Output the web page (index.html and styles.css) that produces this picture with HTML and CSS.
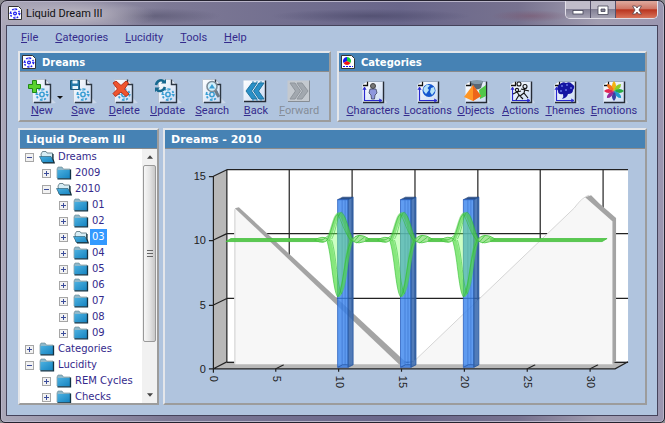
FILE: index.html
```html
<!DOCTYPE html>
<html lang="en">
<head>
<meta charset="utf-8">
<title>Liquid Dream III</title>
<link rel="stylesheet" href="styles.css">
</head>
<body>
<svg class="defs" aria-hidden="true">
  <defs>
    <linearGradient id="paper" x1="0" y1="0" x2="1" y2="1"><stop offset="0" stop-color="#fff"/><stop offset="1" stop-color="#c9daf3"/></linearGradient>
    <linearGradient id="blueface" x1="0" y1="0" x2="1" y2="1"><stop offset="0" stop-color="#4bb0e0"/><stop offset="1" stop-color="#1583c0"/></linearGradient>
    <symbol id="doc" viewBox="0 0 28 26">
      <path d="M19 26L28 25L23 20V26Z" fill="#d5e0ee" opacity=".7"/>
      <path d="M4.500 1.500H17.500L22.500 6.500V24.500H4.500Z" fill="url(#paper)" stroke="#b9c4d2"/>
      <path d="M17.500 1.500V6.500H22.500V24.500H6" fill="none" stroke="#2d3743" stroke-width="1.400"/>
      <g fill="none" stroke="#3b9fd4"><circle cx="14" cy="16.500" r="2.200" stroke-width="1.500"/><circle cx="14" cy="16.500" r="5.500" stroke-width="1.800" stroke-dasharray="2 2.300"/><path d="M14 10V13M14 20V23M7.500 16.500H10.500M17.500 16.500H20.500" stroke-width="1"/></g>
    </symbol>
    <symbol id="sheet" viewBox="0 0 28 26">
      <path d="M23 26L28 25L25 20Z" fill="#d5e0ee" opacity=".7"/>
      <path d="M3.500 6.500L8.500 3.500H24.500V24.500H3.500Z" fill="url(#paper)"/>
      <path d="M8.500 3.500V7.500H4" fill="#fff" stroke="#111" stroke-width="1.300"/>
      <path d="M24.500 3.500V24.500H4" fill="none" stroke="#252b35" stroke-width="1.400"/>
      <path d="M8.500 3.500H24" stroke="#9aabc2"/>
    </symbol>
    <symbol id="axes" viewBox="0 0 28 26"><path d="M5.500 10V22.500H22" fill="none" stroke="#2929cf" stroke-width="1.200"/><path d="M4 12L5.500 9L7 12M20 21L23 22.500L20 24" fill="none" stroke="#2929cf"/></symbol>
    <symbol id="chevrons" viewBox="0 0 28 26"><path d="M10 5H15L9.500 13L15 21H10L4 13ZM17 5H22L16.500 13L22 21H17L11.500 13Z"/></symbol>
    <symbol id="app" viewBox="0 0 14 14">
      <path d="M.5 .5H10.500L13.500 3.500V13.500H.5Z" fill="#fff" stroke="#333"/>
      <g fill="none" stroke="#1919ee"><circle cx="7" cy="7.500" r="1.400" stroke-width="1.200"/><circle cx="7" cy="7.500" r="4.500" stroke-width="1.500" stroke-dasharray="1.700 1.834"/><path d="M7 2V4.500M7 10.500V13M1.500 7.500H4M10 7.500H12.500" stroke-width=".8"/></g>
    </symbol>
    <symbol id="folder" viewBox="0 0 16 14">
      <path d="M1 3L2 1H6L7.500 3H14V12H1Z" fill="#8fb9cb" stroke="#64838f" stroke-width=".6"/>
      <path d="M1.500 4H14V12.500H1.500Z" fill="url(#blueface)"/>
      <path d="M14.500 3.500V12.800H1.500" fill="none" stroke="#123344" stroke-width="1.300"/>
    </symbol>
    <symbol id="folder-open" viewBox="0 0 16 14">
      <path d="M2 4L3.500 1.500H7L8 3H13.500V12H3Z" fill="#d7edf5" stroke="#536e7a" stroke-width=".8"/>
      <path d="M.5 6.500H12L15 12.500H3.500Z" fill="url(#blueface)" stroke="#29586b" stroke-width=".6"/>
      <path d="M14 4V9L15.200 12.900H4" fill="none" stroke="#102c38" stroke-width="1.200"/>
    </symbol>
  </defs>
</svg>

<div class="window">
  <header class="titlebar">
    <svg class="app-icon" aria-hidden="true"><use href="#app"/></svg>
    <h1 class="title">Liquid Dream III</h1>
    <div class="window-buttons">
      <button type="button" class="winbtn" aria-label="Minimize"><svg viewBox="0 0 12 12"><rect x="1" y="6.500" width="10" height="3.500" fill="#fff" stroke="#454557" stroke-width=".8"/></svg></button>
      <button type="button" class="winbtn" aria-label="Maximize"><svg viewBox="0 0 12 12"><path d="M1 2H11V10.500H1ZM4 5V7.500H8V5Z" fill="#fff" fill-rule="evenodd" stroke="#454557" stroke-width=".8"/></svg></button>
      <button type="button" class="winbtn close" aria-label="Close"><svg viewBox="0 0 12 12"><path d="M1.500 2H4.500L6 4L7.500 2H10.500L8 6L10.500 10H7.500L6 8L4.500 10H1.500L4 6Z" fill="#fff" stroke="#59434a" stroke-width=".8"/></svg></button>
    </div>
  </header>

  <main class="client">
    <nav class="menu">
      <a href="#file"><u>F</u>ile</a>
      <a href="#categories"><u>C</u>ategories</a>
      <a href="#lucidity"><u>L</u>ucidity</a>
      <a href="#tools"><u>T</u>ools</a>
      <a href="#help"><u>H</u>elp</a>
    </nav>

    <div class="toolbars">
      <section class="panel dreams">
        <h2 class="panel-head with-icon"><svg class="head-icon" aria-hidden="true"><use href="#app"/></svg>Dreams</h2>
        <div class="tools dream-tools">
          <button type="button" class="tool has-menu"><svg viewBox="0 0 28 26"><use href="#doc"/><path d="M4 4.500H8V8.500H12V12.500H8V16.500H4V12.500H0V8.500H4Z" transform="translate(.5 -2)" fill="#5ad32f" stroke="#218716"/></svg><span><u>N</u>ew</span></button>
          <button type="button" class="tool"><svg viewBox="0 0 28 26"><use href="#doc"/><path d="M1.500 2.500H10.500V11.500H1.500Z" fill="#267aa8" stroke="#175879"/><path d="M3.500 2.500H8.500V5.500H3.500ZM3.500 8H9V11H3.500Z" fill="#e8f5fc"/></svg><span><u>S</u>ave</span></button>
          <button type="button" class="tool"><svg viewBox="0 0 28 26"><use href="#doc"/><path d="M3 5L6 3L11 7.500L16 3L18.500 5L14.500 11L19 16L16 18.500L11 14L5.500 18.500L3 15.500L7.500 11Z" fill="#ef542e" stroke="#b9301a"/></svg><span><u>D</u>elete</span></button>
          <button type="button" class="tool"><svg viewBox="0 0 28 26"><use href="#doc"/><path d="M2 7C3 2 8 1 10 4M11 9C9 14 4 14 2.500 11" fill="none" stroke="#176990" stroke-width="2.500"/><path d="M7 5.500H12V1ZM6 9.500H1V14Z" fill="#176990"/></svg><span><u>U</u>pdate</span></button>
          <button type="button" class="tool"><svg viewBox="0 0 28 26"><use href="#doc"/><path d="M17 12L21 19" stroke="#6c7b88" stroke-width="3"/><circle cx="14" cy="8.500" r="5" fill="#d3f0fc" stroke="#7d8d99" stroke-width="1.600"/><path d="M11 10.500L14 6L17 10.500Z" fill="#3b9fd4"/></svg><span><u>S</u>earch</span></button>
          <button type="button" class="tool"><svg viewBox="0 0 28 26"><path d="M1.500 2.500H23.500V23.500H1.500Z" fill="url(#paper)"/><path d="M23.500 2.500V23.500H2" fill="none" stroke="#252b35" stroke-width="1.400"/><path d="M10 4H22M10 22H22" stroke="#3b8fbd" stroke-dasharray="2 2"/><use href="#chevrons" class="chev-blue"/></svg><span><u>B</u>ack</span></button>
          <button type="button" class="tool" disabled><svg viewBox="0 0 28 26"><path d="M2.500 2.500H24.500V23.500H2.500Z" fill="#c4c9cf"/><path d="M24.500 2.500V23.500H3" fill="none" stroke="#868d95"/><use href="#chevrons" class="chev-gray" transform="translate(27 0) scale(-1 1)"/></svg><span><u>F</u>orward</span></button>
        </div>
      </section>

      <section class="panel categories">
        <h2 class="panel-head with-icon"><svg class="head-icon" viewBox="0 0 14 14" aria-hidden="true"><path d="M.5 .5H10.500L13.500 3.500V13.500H.5Z" fill="#fff" stroke="#333"/><path d="M6 6V2A4 4 0 0 0 2.500 8Z" fill="#1414f0"/><path d="M6 6V2A4 4 0 0 1 9.500 8Z" fill="#11d035"/><path d="M6 6L9.500 8A4 4 0 0 1 2.500 8Z" fill="#f31313"/><path d="M2 11.500H12" stroke="#1414f0" stroke-dasharray="2 1"/></svg>Categories</h2>
        <div class="tools category-tools">
          <button type="button" class="tool"><svg viewBox="0 0 28 26"><use href="#sheet"/><use href="#axes"/><circle cx="14" cy="8" r="2.500" fill="#777" stroke="#444"/><path d="M11 11H17L18 15L16 17L15.500 21H12.500L12 17L10 15Z" fill="#8e97dd" stroke="#3f4462" stroke-width=".8"/></svg><span><u>C</u>haracters</span></button>
          <button type="button" class="tool"><svg viewBox="0 0 28 26"><use href="#sheet"/><use href="#axes"/><circle cx="15" cy="12.500" r="6.500" fill="#1557cf"/><path d="M9.500 10L13 6.500L16 7.500L13.500 10L15 12L12 16L9.500 13ZM17 10L20 9L21 13L18 17L16 14Z" fill="#b6e2f8"/></svg><span><u>L</u>ocations</span></button>
          <button type="button" class="tool"><svg viewBox="0 0 28 26"><use href="#sheet"/><path d="M8 3H21L19 10Q14 13 10 10Z" fill="#596773"/><ellipse cx="15" cy="4" rx="6" ry="2" fill="#849aa9"/><path d="M17 12L24 7V18L18 21Z" fill="#51c74a"/><path d="M11 7L19 18L11 23L2 19Z" fill="#ff9625"/><path d="M11 7L19 18L11 23Z" fill="#ed641a"/></svg><span><u>O</u>bjects</span></button>
          <button type="button" class="tool"><svg viewBox="0 0 28 26"><use href="#sheet"/><use href="#axes"/><g fill="none" stroke="#111" stroke-width="1.100"><circle cx="12" cy="6" r="2"/><circle cx="18" cy="8.500" r="2"/><circle cx="10" cy="12" r="1.600"/><path d="M10 14L12 17L9 22M10 14L6 16M12 17L16 21M10 14L14 13M18 11L17 15L21 20M17 15L13 18M14 11L18 12L22 13"/></g></svg><span><u>A</u>ctions</span></button>
          <button type="button" class="tool"><svg viewBox="0 0 28 26"><use href="#sheet"/><use href="#axes"/><path d="M9 6Q12 3 15 5Q19 3 21 6Q25 8 22 12Q22 16 17 16Q16 20 11 21Q13 19 12 16Q7 17 7 13Q5 8 9 6Z" fill="#1515a2"/><g fill="#6674e4"><circle cx="11" cy="8" r="1"/><circle cx="16" cy="7" r="1"/><circle cx="20" cy="10" r="1"/><circle cx="10" cy="13" r="1"/><circle cx="15" cy="12" r="1"/></g></svg><span><u>T</u>hemes</span></button>
          <button type="button" class="tool"><svg viewBox="0 0 28 26"><use href="#sheet"/><g transform="translate(14 13)"><path d="M0 0Q-4-6 0-10Q4-6 0 0Z" fill="#f2b311"/><path d="M0 0Q-4-6 0-10Q4-6 0 0Z" transform="rotate(45)" fill="#8fcc28"/><path d="M0 0Q-4-6 0-10Q4-6 0 0Z" transform="rotate(90)" fill="#27aa45"/><path d="M0 0Q-4-6 0-10Q4-6 0 0Z" transform="rotate(135)" fill="#2099cf"/><path d="M0 0Q-4-6 0-10Q4-6 0 0Z" transform="rotate(180)" fill="#3740a4"/><path d="M0 0Q-4-6 0-10Q4-6 0 0Z" transform="rotate(225)" fill="#942b9b"/><path d="M0 0Q-4-6 0-10Q4-6 0 0Z" transform="rotate(270)" fill="#e32552"/><path d="M0 0Q-4-6 0-10Q4-6 0 0Z" transform="rotate(315)" fill="#f27620"/></g></svg><span><u>E</u>motions</span></button>
        </div>
      </section>
    </div>

    <div class="work">
      <section class="panel tree-panel">
        <h2 class="panel-head">Liquid Dream III</h2>
        <div class="tree-body">
          <ul class="tree">
            <li><div class="node"><button type="button" class="toggle open" aria-label="Collapse Dreams"></button><svg><use href="#folder-open"/></svg><span>Dreams</span></div>
              <ul>
                <li><div class="node"><button type="button" class="toggle" aria-label="Expand 2009"></button><svg><use href="#folder"/></svg><span>2009</span></div></li>
                <li><div class="node"><button type="button" class="toggle open" aria-label="Collapse 2010"></button><svg><use href="#folder-open"/></svg><span>2010</span></div>
                  <ul>
                    <li><div class="node"><button type="button" class="toggle" aria-label="Expand 01"></button><svg><use href="#folder"/></svg><span>01</span></div></li>
                    <li><div class="node"><button type="button" class="toggle" aria-label="Expand 02"></button><svg><use href="#folder"/></svg><span>02</span></div></li>
                    <li><div class="node"><button type="button" class="toggle" aria-label="Expand 03"></button><svg><use href="#folder-open"/></svg><span class="selected">03</span></div></li>
                    <li><div class="node"><button type="button" class="toggle" aria-label="Expand 04"></button><svg><use href="#folder"/></svg><span>04</span></div></li>
                    <li><div class="node"><button type="button" class="toggle" aria-label="Expand 05"></button><svg><use href="#folder"/></svg><span>05</span></div></li>
                    <li><div class="node"><button type="button" class="toggle" aria-label="Expand 06"></button><svg><use href="#folder"/></svg><span>06</span></div></li>
                    <li><div class="node"><button type="button" class="toggle" aria-label="Expand 07"></button><svg><use href="#folder"/></svg><span>07</span></div></li>
                    <li><div class="node"><button type="button" class="toggle" aria-label="Expand 08"></button><svg><use href="#folder"/></svg><span>08</span></div></li>
                    <li><div class="node"><button type="button" class="toggle" aria-label="Expand 09"></button><svg><use href="#folder"/></svg><span>09</span></div></li>
                  </ul>
                </li>
              </ul>
            </li>
            <li><div class="node"><button type="button" class="toggle" aria-label="Expand Categories"></button><svg><use href="#folder"/></svg><span>Categories</span></div></li>
            <li><div class="node"><button type="button" class="toggle open" aria-label="Collapse Lucidity"></button><svg><use href="#folder"/></svg><span>Lucidity</span></div>
              <ul>
                <li><div class="node"><button type="button" class="toggle" aria-label="Expand REM Cycles"></button><svg><use href="#folder"/></svg><span>REM Cycles</span></div></li>
                <li><div class="node"><button type="button" class="toggle" aria-label="Expand Checks"></button><svg><use href="#folder"/></svg><span>Checks</span></div></li>
              </ul>
            </li>
          </ul>
          <div class="scrollbar" aria-hidden="true">
            <svg class="arrow" viewBox="0 0 7 4"><path d="M0 4L3.500 0L7 4Z" fill="#444"/></svg>
            <div class="thumb"><i></i></div>
            <svg class="arrow" viewBox="0 0 7 4"><path d="M0 0L3.500 4L7 0Z" fill="#444"/></svg>
          </div>
        </div>
      </section>

      <section class="panel chart-panel">
        <h2 class="panel-head">Dreams - 2010</h2>
        <svg class="chart" viewBox="165 149 481 254" role="img" aria-label="Dreams - 2010 chart">
          <defs>
            <g id="bar">
              <path d="M0 199.500L5 197H15.500L10.500 199.500Z" fill="#294f89" stroke="#1d3b70" stroke-width=".6"/>
              <path d="M0 199.500H10.500V367.500H0Z" fill="#3d86ee" fill-opacity=".82" stroke="#2c62c0" stroke-width=".8"/>
              <path d="M10.500 199.500L15.500 197V365L10.500 367.500Z" fill="#3465ad" fill-opacity=".85" stroke="#23559f" stroke-width=".8"/>
              <path d="M4.500 200V365M7.500 200V365" stroke="#2c62c0" stroke-opacity=".6" stroke-width=".8"/>
              <path d="M0 367.500L5 365H10" fill="none" stroke="#2453a2" stroke-width=".8"/>
            </g>
            <g id="wave" stroke-linejoin="round">
              <path d="M-11 240C-6 232-4 212 2 212C8 212 11 232 15 240C10 255 9 294 1 297C-5 290-6 255-11 240Z" fill="#80ff68" fill-opacity=".4"/>
              <path d="M-10 240C-5 232-3 214 1.500 214C7 214 9 233 14 240" fill="none" stroke="#42c638" stroke-opacity=".5" stroke-width="4"/>
              <path d="M-9 240C-3 256-4 285 1 295C9 287 7 256 14 240" fill="none" stroke="#42d038" stroke-opacity=".5" stroke-width="4"/>
              <path d="M-11 241C-6 232-4 216 0 214C4 220 6 232 14 241M-6 239C-1 230 0 212 4 212C9 216 11 232 15 239M-11 240C-6 254-5 290 0 297C6 290 6 256 14 240M-6 240C-1 256-1 285 4 294" fill="none" stroke="#2fbd2e" stroke-opacity=".7" stroke-width=".8"/>
              <path d="M-23 240Q-15 235-10 239Q-13 245-23 240ZM14 240Q20 231 32 239Q20 246 14 240Z" fill="#80dc70" fill-opacity=".7" stroke="#42c63b" stroke-width=".8"/>
              <path d="M-20 240Q-14 241-10 236M16 242L22 235M19 243L27 237" stroke="#42c63b" fill="none" stroke-width=".8"/>
            </g>
          </defs>
          <path d="M227 169.500H629V362H227Z" fill="#fff"/>
          <path d="M213.500 176L227 169.500V362L213.500 369Z" fill="#b8b8b8"/>
          <path d="M213.500 369L227 362H629L616 369Z" fill="#b8b8b8"/>
          <path d="M227 169.500H629M227 233.500H629M227 298.500H629M227 362.500H629M289.500 169V362M352.500 169V362M415.500 169V362M478.500 169V362M541 169V362M604 169V362" class="grid-line"/>
          <path d="M227 169V362L213.500 369M213.500 176L227 169.500M213.500 240L227 233.500M213.500 305L227 298.500M213.500 369V176M209 176.500H213.500M209 240.500H213.500M209 305.500H213.500M209 369H616L629 362" class="grid-line"/>
          <path d="M213.500 369V373M276 372V369L284 365M339 372V369M402 372V369M465 372V369M528 372V369L536 365M591 372V369L599 365" class="grid-line"/>
          <path d="M235 209H238L402 364.500H235Z" fill="#f7f7f7"/>
          <path d="M235 209V364" stroke="#ddd" stroke-width="1.500"/>
          <path d="M402 364.500L414 362L575 208Q583 197 590 197L614 221V364.500Z" fill="#f7f7f7"/>
          <path d="M414 362L575 208Q583 197 590 195" fill="none" stroke="#d5d5d5"/>
          <path d="M235 208L239 207L407 363L400 365Z" fill="#a4a4a4"/>
          <path d="M586 197L592 195L600 203L617 218V362L613 364V221Z" fill="#a4a4a4"/>
          <path d="M613.500 221V363" stroke="#ccc"/>
          <use href="#bar" x="338"/><use href="#bar" x="401"/><use href="#bar" x="464"/>
          <path d="M226 241.500L231 238.500H318L324 241.500ZM366 238.500H381L386 241.500H366ZM429 238.500H444L449 241.500H429ZM491 238.500H608L603 241.500H491Z" fill="#5cc951" stroke="#42bf3b" stroke-width=".8"/>
          <use href="#wave" x="338"/><use href="#wave" x="401"/><use href="#wave" x="464"/>
          <g class="y-labels"><text x="206" y="180">15</text><text x="206" y="244">10</text><text x="206" y="309">5</text><text x="206" y="373">0</text></g>
          <g class="x-labels"><text transform="translate(210 376) rotate(90)">0</text><text transform="translate(273 376) rotate(90)">5</text><text transform="translate(336 376) rotate(90)">10</text><text transform="translate(399 376) rotate(90)">15</text><text transform="translate(462 376) rotate(90)">20</text><text transform="translate(525 376) rotate(90)">25</text><text transform="translate(588 376) rotate(90)">30</text></g>
        </svg>
      </section>
    </div>
  </main>
</div>
</body>
</html>
```
FILE: styles.css
```css
* { box-sizing: border-box; }
body {
  margin: 0;
  background: #8b8b90;
  color: #342a8c;
  font-family: Roboto, "Noto Sans", sans-serif;
  font-size: 11px;
}
button { font: inherit; color: inherit; margin: 0; }
.defs { position: absolute; width: 0; height: 0; }

.window {
  height: 100vh;
  min-height: 400px;
  display: flex;
  flex-direction: column;
  padding: 0 6px 6px 5px;
  border: 1px solid #24222f;
  border-radius: 7px 7px 5px 5px;
  box-shadow: inset 0 0 0 1px #b9b5c9;
  background:
    radial-gradient(ellipse 90px 16px at 64px 14px, #b3afbd 30%, transparent 100%),
    radial-gradient(ellipse 70px 8px at 150px 15px, #514f6a99, transparent),
    radial-gradient(ellipse 100px 7px at 370px 15px, #4c4a6bbb, transparent),
    radial-gradient(ellipse 40px 6px at 530px 15px, #7a526a88, transparent),
    linear-gradient(90deg, #aaa7b8 0, #7d7995 25%, #69668a 60%, #77728f 78%, #a19db0 90%, #9a96b0 100%);
}
.titlebar {
  flex: none;
  height: 24px;
  display: flex;
  align-items: center;
  padding-left: 2px;
}
.app-icon { width: 14px; height: 14px; }
.title {
  flex: 1;
  margin: 0 0 0 4px;
  color: #111;
  font-size: 11px;
  font-weight: 400;
}
.window-buttons {
  align-self: flex-start;
  display: flex;
  border: 1px solid #e2dfe8;
  border-top: 0;
  border-radius: 0 0 5px 5px;
  overflow: hidden;
}
.winbtn {
  width: 25px;
  height: 17px;
  padding: 0;
  display: grid;
  place-items: center;
  border: 0;
  border-right: 1px solid #55516a;
  background: linear-gradient(#c0bcc9 45%, #827f94 50%, #a7a4b5);
}
.winbtn svg { width: 12px; height: 12px; }
.winbtn.close {
  width: 41px;
  border-right: 0;
  background: linear-gradient(#dda599 5%, #cf7767 45%, #b93520 52%, #d9745b);
}

.client {
  flex: 1;
  min-height: 0;
  display: flex;
  flex-direction: column;
  padding: 1px 10px 10px 11px;
  border: 1px solid #45435b;
  background: #b0c4de;
}
.menu {
  display: flex;
  gap: 17px;
  height: 24px;
  padding: 2px 0 0 3px;
  line-height: 18px;
}
.menu a { color: inherit; text-decoration: none; }

.panel {
  display: flex;
  flex-direction: column;
  min-width: 0;
  border: 2px solid;
  border-color: #e4e6ea #9c9c9c #9c9c9c #e4e6ea;
}
.panel-head {
  display: flex;
  align-items: center;
  flex: none;
  height: 19px;
  margin: 0;
  padding-left: 6px;
  border-bottom: 1px solid #8b8b8b;
  background: #4682b4;
  color: #fff;
  font: bold 11px "DejaVu Sans", sans-serif;
}
.panel-head.with-icon { gap: 6px; padding-left: 2px; font-size: 10px; }
.head-icon { width: 14px; height: 14px; }

.toolbars { display: flex; gap: 6px; margin-bottom: 6px; }
.toolbars .panel { height: 71px; }
.dreams { flex: 313 0 0; }
.categories { flex: 310 0 0; }
.tools { flex: 1; display: grid; }
.dream-tools { grid-template-columns: 42fr 41fr 42fr 45fr 45fr 43fr 44fr; padding: 6px 8px 0 1px; }
.category-tools { grid-template-columns: 58fr 51fr 45fr 44fr 45fr 52fr; padding: 6px 5px 0; }
.tool {
  display: flex;
  flex-direction: column;
  align-items: center;
  min-width: 0;
  padding: 0;
  border: 0;
  background: none;
  line-height: 14px;
}
.tool svg { width: 28px; height: 26px; }
.tool:disabled { color: #858d98; }
.has-menu { position: relative; }
.has-menu::after {
  content: "";
  position: absolute;
  right: 0;
  top: 18px;
  border: 3px solid transparent;
  border-top-color: #111;
  border-bottom: 0;
}
.chev-blue { fill: #2990c8; stroke: #1f739f; stroke-width: 1px; }
.chev-gray { fill: #a2a8af; stroke: #90969d; stroke-width: 1px; }

.work { flex: 1; min-height: 0; display: flex; gap: 4px; }
.tree-panel { flex: 0 0 141px; }
.tree-body { flex: 1; min-height: 0; display: flex; background: #fff; }
.tree, .tree ul { list-style: none; margin: 0; padding: 0; }
.tree { flex: 1; min-width: 0; overflow: hidden; padding-left: 5px; font: 10px/16px "DejaVu Sans", sans-serif; }
.tree ul { padding-left: 17px; }
.node { display: flex; align-items: center; height: 16px; white-space: nowrap; }
.node svg { width: 16px; height: 14px; margin: 0 1px 0 5px; flex: none; }
.node span { padding: 0 2px; }
.node .selected { background: #3399ff; color: #fff; }
.toggle {
  flex: none;
  width: 9px;
  height: 9px;
  padding: 0;
  border: 1px solid #a6a6a6;
  background:
    linear-gradient(#3b4c9a, #3b4c9a) center / 5px 1px no-repeat,
    linear-gradient(#3b4c9a, #3b4c9a) center / 1px 5px no-repeat,
    #f2f2f2;
}
.toggle.open { background: linear-gradient(#3b4c9a, #3b4c9a) center / 5px 1px no-repeat, #f2f2f2; }

.scrollbar {
  flex: none;
  width: 15px;
  display: flex;
  flex-direction: column;
  align-items: center;
  padding: 6px 0;
  background: #f1f1f1;
}
.arrow { width: 6px; height: 4px; flex: none; }
.thumb {
  width: 13px;
  height: 73%;
  margin: 6px 0 auto;
  display: grid;
  place-items: center;
  border: 1px solid #999;
  border-radius: 2px;
  background: linear-gradient(90deg, #f7f7f7, #e5e5e5 50%, #c8c8c8);
}
.thumb i { width: 6px; height: 7px; background: repeating-linear-gradient(#666 0 1px, transparent 1px 3px); }

.chart-panel { flex: 1; }
.chart { display: block; flex: 1; width: 100%; min-height: 0; }
.grid-line { fill: none; stroke: #222; stroke-width: 1.2px; }
.chart text { fill: #222; font-family: "Liberation Sans", sans-serif; font-size: 11px; }
.y-labels { text-anchor: end; }
```
